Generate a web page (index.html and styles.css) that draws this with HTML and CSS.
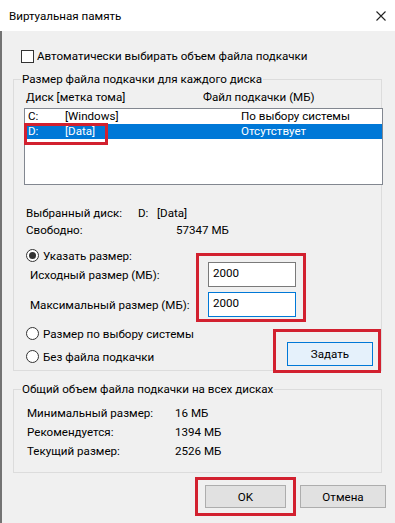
FILE: index.html
```html
<!DOCTYPE html>
<html lang="ru">
<head>
<meta charset="utf-8">
<title>Виртуальная память</title>
<link rel="stylesheet" href="styles.css">
</head>
<body>
<div class="window">
  <div class="titlebar">
    <span class="title">Виртуальная память</span>
    <svg class="close" width="10" height="10" viewBox="0 0 10 10"><path d="M0.5 0.5L9.5 9.5M9.5 0.5L0.5 9.5" stroke="#222" stroke-width="1.1" fill="none"/></svg>
  </div>
  <div class="content">
    <div class="auto"><span class="checkbox"></span><span>Автоматически выбирать объем файла подкачки</span></div>

    <fieldset class="group g1">
      <legend>Размер файла подкачки для каждого диска</legend>
      <div class="list-head"><span class="lh-disk">Диск [метка тома]</span><span>Файл подкачки (МБ)</span></div>
      <div class="listbox">
        <div class="lrow"><span>C:</span><span>[Windows]</span><span>По выбору системы</span></div>
        <div class="lrow sel"><span>D:</span><span>[Data]</span><span>Отсутствует</span></div>
      </div>
      <div class="info">
        <div class="irow"><span class="ilabel w1">Выбранный диск:</span><span class="drive">D:</span><span>[Data]</span></div>
        <div class="irow"><span class="ilabel w2">Свободно:</span><span>57347 МБ</span></div>
      </div>
      <div class="radio-row first"><span class="radio on"></span><span>Указать размер:</span></div>
      <div class="sizes">
        <span class="slabel">Исходный размер (МБ):</span><div class="input">2000</div>
        <span class="slabel">Максимальный размер (МБ):</span><div class="input focus">2000</div>
      </div>
      <div class="bottom">
        <div class="radios">
          <div class="radio-row"><span class="radio"></span><span>Размер по выбору системы</span></div>
          <div class="radio-row"><span class="radio"></span><span>Без файла подкачки</span></div>
        </div>
        <div class="btn set">Задать</div>
      </div>
    </fieldset>

    <fieldset class="group g2">
      <legend>Общий объем файла подкачки на всех дисках</legend>
      <div class="totals">
        <div class="trow"><span class="tlabel">Минимальный размер:</span><span>16 МБ</span></div>
        <div class="trow"><span class="tlabel">Рекомендуется:</span><span>1394 МБ</span></div>
        <div class="trow"><span class="tlabel">Текущий размер:</span><span>2526 МБ</span></div>
      </div>
    </fieldset>

    <div class="actions">
      <div class="btn ok">OK</div>
      <div class="btn cancel">Отмена</div>
    </div>
  </div>

  <div class="mark m1"></div>
  <div class="mark m2"></div>
  <div class="mark m3"></div>
  <div class="mark m4"></div>
</div>
</body>
</html>
```
FILE: styles.css
```css
* { box-sizing: border-box; }
body {
  margin: 0;
  font-family: Roboto, "Noto Sans", sans-serif;
  font-size: 11.6px;
  color: #000;
  background: #f0f0f0;
}
.window {
  width: 395px;
  height: 523px;
  background: #f0f0f0;
  position: relative;
  overflow: hidden;
}
.titlebar {
  height: 31px;
  background: #fff;
  display: flex;
  align-items: center;
  justify-content: space-between;
  padding: 0 9px 0 9px;
  line-height: 16px;
}
.close { display: block; margin-top: 1px; }
.content {
  height: 492px;
  border-left: 2px solid #737373;
  padding-left: 11px;
  display: flex;
  flex-direction: column;
  align-items: flex-start;
}
.auto {
  display: flex;
  align-items: center;
  gap: 3px;
  height: 14px;
  margin: 18px 0 0 8px;
  line-height: 16px;
}
.checkbox {
  width: 13px;
  height: 13px;
  border: 1px solid #333;
  background: #fff;
  flex: none;
}
.group {
  margin: 8px 0 0 0;
  padding: 0;
  border: 1px solid #dcdcdc;
  width: 369px;
  min-width: 0;
}
.group legend {
  margin-left: 7px;
  padding: 0 1px;
  line-height: 16px;
}
.list-head {
  display: flex;
  margin: 2px 0 0 12px;
  line-height: 16px;
}
.lh-disk { width: 177px; }
.listbox {
  margin: 3px 0 0 10px;
  width: 359px;
  height: 77px;
  border: 1px solid #828790;
  background: #fff;
}
.lrow {
  display: grid;
  grid-template-columns: 37px 176px 1fr;
  height: 15px;
  line-height: 15px;
  padding-left: 3px;
  overflow: hidden;
}
.lrow.sel { background: #0078d7; color: #fff; }
.info { margin: 20px 0 0 12px; }
.irow { display: flex; line-height: 17px; }
.ilabel.w1 { width: 112px; }
.ilabel.w2 { width: 150px; }
.drive { width: 19px; }
.radio-row {
  display: flex;
  align-items: center;
  gap: 4px;
  height: 13px;
  line-height: 16px;
}
.radio-row.first { margin: 10px 0 0 12px; }
.radio {
  width: 13px;
  height: 13px;
  border: 1px solid #333;
  border-radius: 50%;
  background: #fff;
  flex: none;
  display: flex;
  align-items: center;
  justify-content: center;
}
.radio.on::after {
  content: "";
  width: 7px;
  height: 7px;
  border-radius: 50%;
  background: #333;
}
.sizes {
  display: grid;
  grid-template-columns: 178px 88px;
  row-gap: 5px;
  align-items: center;
  margin: 0 0 0 16px;
}
.input {
  height: 25px;
  border: 1px solid #7a7a7a;
  background: #fff;
  padding: 2px 0 0 4px;
  line-height: 16px;
}
.input.focus { border-color: #0078d7; }
.bottom { display: flex; }
.radios { margin-left: 12px; }
.radios .radio-row { margin-top: 10px; }
.btn {
  display: flex;
  align-items: center;
  justify-content: center;
  border: 1px solid #adadad;
  background: #e1e1e1;
  line-height: 16px;
}
.btn.set {
  margin: 25px 8px 0 auto;
  width: 86px;
  height: 24px;
  background: #e5f1fb;
  border-color: #0078d7;
}
.g1 { padding-bottom: 4px; }
.g2 { margin-top: 10px; padding-bottom: 11px; }
.totals { margin: 7px 0 0 13px; }
.trow { display: flex; line-height: 19px; }
.tlabel { width: 148px; }
.actions {
  display: flex;
  gap: 14px;
  align-self: flex-end;
  margin: 12px 9px 0 0;
}
.btn.ok { width: 81px; height: 23px; }
.btn.cancel { width: 86px; height: 23px; }
.mark {
  position: absolute;
  border: 3px solid #d2202f;
}
.m1 { left: 24px; top: 123px; width: 84px; height: 22px; }
.m2 { left: 196px; top: 253px; width: 110px; height: 69px; }
.m3 { left: 273px; top: 329px; width: 108px; height: 44px; }
.m4 { left: 195px; top: 477px; width: 101px; height: 39px; }
```
